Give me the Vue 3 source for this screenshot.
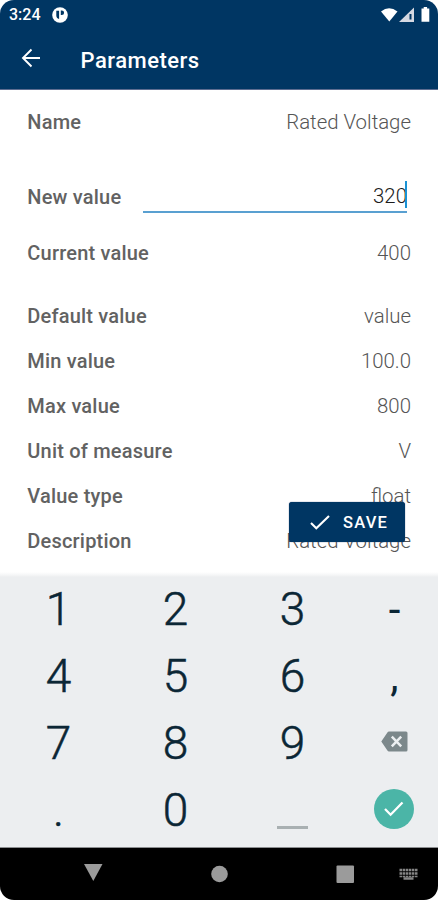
<script setup>
const rows = [
  { label: 'Name', value: 'Rated Voltage', kind: 'name' },
  { label: 'New value', value: '320', kind: 'edit' },
  { label: 'Current value', value: '400', kind: 'current' },
  { label: 'Default value', value: 'value' },
  { label: 'Min value', value: '100.0' },
  { label: 'Max value', value: '800' },
  { label: 'Unit of measure', value: 'V' },
  { label: 'Value type', value: 'float' },
  { label: 'Description', value: 'Rated Voltage' },
]
const keys = ['1', '2', '3', '-', '4', '5', '6', ',', '7', '8', '9', 'delete', '.', '0', 'space', 'done']
</script>

<template>
  <div class="phone">
    <header class="header">
      <div class="status">
        <span class="time">3:24</span>
        <svg class="notice" width="16" height="16" viewBox="0 0 16 16">
          <circle cx="8" cy="8" r="7.8" fill="#fff" />
          <path d="M4.300 3.800h2.800v8.200q-2.800-.6-2.800-3.400zM8.800 3.400h1a2.300 2.300 0 0 1 0 4.600h-1z" fill="#003663" />
        </svg>
        <svg class="signals" width="52" height="18" viewBox="0 0 52 18">
          <path d="M1 5.500Q9 -1 17.500 5.500L9.300 15.500z" fill="#fff" />
          <path d="M34 1.500V16H19z" fill="#d6d9e2" />
          <path d="M29.500 8h2v5.500h-2z" fill="#003663" />
          <path d="M41.500 2.500h2.200V1h3.400v1.500h2.200v13.200h-7.800z" fill="#fff" />
        </svg>
      </div>
      <div class="bar">
        <svg class="back" width="20" height="20" viewBox="0 0 20 20">
          <path d="M19 10H2M10.500 1.500L2 10l8.500 8.500" fill="none" stroke="#fff" stroke-width="1.900" />
        </svg>
        <h1 class="title">Parameters</h1>
      </div>
    </header>

    <main class="details">
      <div v-for="row in rows" :key="row.label" class="row" :class="row.kind">
        <span class="label">{{ row.label }}</span>
        <span v-if="row.kind === 'edit'" class="field"><span class="typed">{{ row.value }}</span><i class="caret"></i></span>
        <span v-else class="value">{{ row.value }}</span>
      </div>
      <button class="save">
        <svg width="20" height="15" viewBox="0 0 20 15">
          <path d="M1 8l5.300 5.300L19 1" fill="none" stroke="#fff" stroke-width="2.100" />
        </svg>
        <span>SAVE</span>
      </button>
    </main>

    <section class="keypad">
      <div v-for="key in keys" :key="key" class="key" :class="{ symbol: key === ',' || key === '-' }">
        <svg v-if="key === 'delete'" class="delete" width="27" height="21" viewBox="0 0 27 21">
          <path d="M8 .5h17a1.500 1.500 0 0 1 1.500 1.500v17a1.500 1.500 0 0 1-1.500 1.500H8q-1 0-1.600-.9L.3 10.500l6.100-9.100Q7 .5 8 .5z" fill="#7c888b" />
          <path d="M10.800 5.700l9.400 9.600m0-9.600l-9.400 9.600" stroke="#eceff1" stroke-width="2.500" />
        </svg>
        <i v-else-if="key === 'space'" class="space"></i>
        <span v-else-if="key === 'done'" class="done">
          <svg width="20" height="16" viewBox="0 0 20 16">
            <path d="M1 8l5.600 5.700L18.500 1.500" fill="none" stroke="#fff" stroke-width="2.300" />
          </svg>
        </span>
        <span v-else>{{ key }}</span>
      </div>
    </section>

    <nav class="nav">
      <svg width="438" height="52" viewBox="0 0 438 52">
        <g fill="#9b9b9b">
          <path d="M84 16h18.500l-9.200 17z" />
          <circle cx="219.500" cy="26" r="8.300" />
          <rect x="336.500" y="17.500" width="17.500" height="17.500" rx="1" />
        </g>
        <g fill="none" stroke="#858585">
          <path d="M399.500 22H417.500M399.500 25.500H417.500" stroke-width="2.500" stroke-dasharray="2.500 .6" />
          <path d="M399.500 28.500H417.500" stroke-width="1.500" stroke-dasharray="2.500 .6" />
          <path d="M403.500 30.500H413.500" stroke-width="2.500" />
        </g>
      </svg>
    </nav>
  </div>
</template>

<style>
body {
  margin: 0;
  background: #fff;
}
</style>

<style scoped>
.phone {
  width: 438px;
  height: 900px;
  display: flex;
  flex-direction: column;
  overflow: hidden;
  border-radius: 14px;
  background: #fff;
  font-family: Roboto, sans-serif;
}
.header {
  height: 90px;
  box-sizing: border-box;
  background: #003663;
  border-bottom: 1px solid #5d6d91;
  color: #fff;
}
.status {
  height: 29px;
  display: flex;
  align-items: center;
  padding: 0 4px 0 9px;
}
.time {
  width: 43px;
  font-size: 16px;
  font-weight: 500;
}
.signals {
  margin-left: auto;
  margin-right: 2px;
}
.bar {
  height: 58px;
  display: flex;
  align-items: center;
  padding-left: 21px;
}
.title {
  margin: 4px 0 0 39.5px;
  font-size: 22px;
  font-weight: 500;
  letter-spacing: 0.5px;
}
.details {
  position: relative;
  height: 475px;
  padding: 9px 27px 0;
  box-sizing: border-box;
}
.row {
  height: 45px;
  display: flex;
  align-items: center;
  justify-content: space-between;
  font-size: 20px;
  color: #626262;
}
.row.name {
  margin-bottom: 30px;
}
.row.edit {
  margin-bottom: 11px;
}
.row.current {
  margin-bottom: 18px;
}
.label {
  padding-left: 0.3px;
  font-weight: 500;
  letter-spacing: 0.2px;
}
.value {
  font-size: 20.4px;
  font-weight: 300;
  color: #555;
}
.field {
  width: 264px;
  height: 32px;
  box-sizing: border-box;
  margin-right: 4px;
  display: flex;
  justify-content: flex-end;
  align-items: flex-start;
  border-bottom: 2px solid #59a0d1;
  font-size: 20.4px;
  font-weight: 300;
  color: #1c1c1c;
}
.typed {
  line-height: 30px;
  margin-right: -2px;
}
.caret {
  width: 2px;
  height: 27px;
  background: #1a92d4;
}
.save {
  position: absolute;
  left: 289px;
  top: 412px;
  width: 116px;
  height: 40px;
  display: flex;
  align-items: center;
  gap: 13px;
  padding: 0 0 0 21px;
  border: 0;
  border-radius: 3px;
  background: #003663;
  box-shadow: 0 0 1px #001c50;
  color: #fff;
  font: 500 16.5px Roboto, sans-serif;
  letter-spacing: 1.2px;
}
.keypad {
  height: 283px;
  box-sizing: border-box;
  padding-top: 11px;
  display: grid;
  grid-template-columns: 117px 117px 117px 87px;
  grid-template-rows: repeat(4, 66.8px);
  background: linear-gradient(#fff 7px, #f5f6f7 10px, #eceef0 12px);
  border-bottom: 1px solid #8c8e90;
}
.key {
  display: flex;
  align-items: center;
  justify-content: center;
  font-size: 46px;
  font-weight: 300;
  color: #0b2635;
  -webkit-text-stroke: 0.5px #0b2635;
}
.delete {
  margin-top: -3px;
}
.space {
  width: 31px;
  height: 3px;
  margin-top: 36px;
  background: #a9b0b2;
}
.done {
  width: 40px;
  height: 40px;
  margin: -2px 1px 0 0;
  display: flex;
  align-items: center;
  justify-content: center;
  border-radius: 50%;
  background: #4bb5a7;
}
.symbol {
  font-size: 42px;
  font-weight: 400;
  -webkit-text-stroke: 0;
}
.nav {
  height: 52px;
  background: #000;
}
</style>
